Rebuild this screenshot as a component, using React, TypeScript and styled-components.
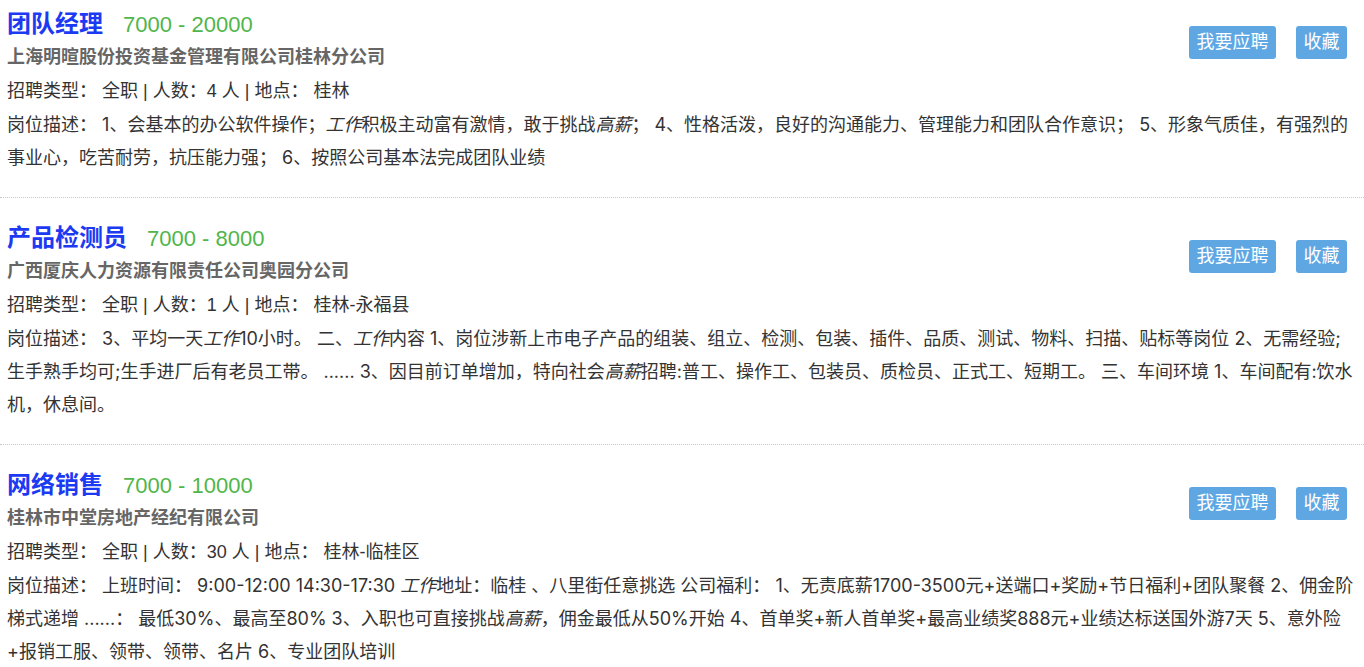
import React from "react";
import styled, { createGlobalStyle } from "styled-components";

const Global = createGlobalStyle`
  html, body { margin: 0; padding: 0; background: #fff; }
  body {
    font-family: "Liberation Sans", "Noto Sans CJK SC", sans-serif;
    color: #333;
  }
`;

const List = styled.ul`
  list-style: none;
  margin: 0;
  padding: 0;
  width: 1364px;
`;

const Item = styled.li<{ $first?: boolean }>`
  padding: ${(p) => (p.$first ? "7px" : "23px")} 7px 23px 7px;
  border-bottom: 1px dotted #c8c8c8;
  &:last-child { border-bottom: none; }
`;

const Actions = styled.div`
  float: right;
  display: flex;
  gap: 20px;
  margin-top: 19px;
  margin-right: 10px;
`;

const Btn = styled.a`
  display: inline-block;
  height: 33px;
  line-height: 33px;
  padding: 0 7.5px;
  background: #5ea7e3;
  color: #fff;
  font-size: 18px;
  border-radius: 3px;
  text-decoration: none;
  cursor: pointer;
`;

const TitleRow = styled.div`
  display: flex;
  align-items: baseline;
  height: 33px;
  line-height: 33px;
`;

const Title = styled.a`
  font-size: 24px;
  font-weight: bold;
  color: #1b3af2;
  text-decoration: none;
`;

const Salary = styled.span`
  font-size: 22px;
  color: #4fb64a;
  margin-left: 20px;
`;

const Company = styled.div`
  font-size: 18px;
  font-weight: bold;
  color: #666;
  line-height: 34px;
`;

const Meta = styled.div`
  font-size: 18px;
  line-height: 34px;
  color: #333;
`;

const Desc = styled.p`
  margin: 0;
  font-family: "Inter", "Noto Sans CJK SC", sans-serif;
  font-size: 18px;
  line-height: 33px;
  color: #333;
  em { font-style: italic; }
`;

type Job = {
  title: string;
  salary: string;
  company: string;
  count: string;
  place: string;
  desc: React.ReactNode;
};

const jobs: Job[] = [
  {
    title: "团队经理",
    salary: "7000 - 20000",
    company: "上海明暄股份投资基金管理有限公司桂林分公司",
    count: "4",
    place: "桂林",
    desc: (
      <>
        1、会基本的办公软件操作；<em>工作</em>积极主动富有激情，敢于挑战<em>高薪</em>； 4、性格活泼，良好的沟通能力、管理能力和团队合作意识； 5、形象气质佳，有强烈的事业心，吃苦耐劳，抗压能力强； 6、按照公司基本法完成团队业绩
      </>
    ),
  },
  {
    title: "产品检测员",
    salary: "7000 - 8000",
    company: "广西厦庆人力资源有限责任公司奥园分公司",
    count: "1",
    place: "桂林-永福县",
    desc: (
      <>
        3、平均一天<em>工作</em>10小时。 二、<em>工作</em>内容 1、岗位涉新上市电子产品的组装、组立、检测、包装、插件、品质、测试、物料、扫描、贴标等岗位 2、无需经验;生手熟手均可;生手进厂后有老员工带。 ...... 3、因目前订单增加，特向社会<em>高薪</em>招聘:普工、操作工、包装员、质检员、正式工、短期工。 三、车间环境 1、车间配有:饮水机，休息间。
      </>
    ),
  },
  {
    title: "网络销售",
    salary: "7000 - 10000",
    company: "桂林市中堂房地产经纪有限公司",
    count: "30",
    place: "桂林-临桂区",
    desc: (
      <>
        上班时间： 9:00-12:00 14:30-17:30 <em>工作</em>地址：临桂 、八里街任意挑选 公司福利： 1、无责底薪1700-3500元+送端口+奖励+节日福利+团队聚餐 2、佣金阶梯式递增 ......： 最低30%、最高至80% 3、入职也可直接挑战<em>高薪</em>，佣金最低从50%开始 4、首单奖+新人首单奖+最高业绩奖888元+业绩达标送国外游7天 5、意外险+报销工服、领带、领带、名片 6、专业团队培训
      </>
    ),
  },
];

export default function App() {
  return (
    <>
      <Global />
      <List>
        {jobs.map((j, i) => (
          <Item key={j.title} $first={i === 0}>
            <Actions>
              <Btn>我要应聘</Btn>
              <Btn>收藏</Btn>
            </Actions>
            <TitleRow>
              <Title>{j.title}</Title>
              <Salary>{j.salary}</Salary>
            </TitleRow>
            <Company>{j.company}</Company>
            <Meta>
              招聘类型： 全职 | 人数：{j.count} 人 | 地点： {j.place}
            </Meta>
            <Desc>岗位描述： {j.desc}</Desc>
          </Item>
        ))}
      </List>
    </>
  );
}
